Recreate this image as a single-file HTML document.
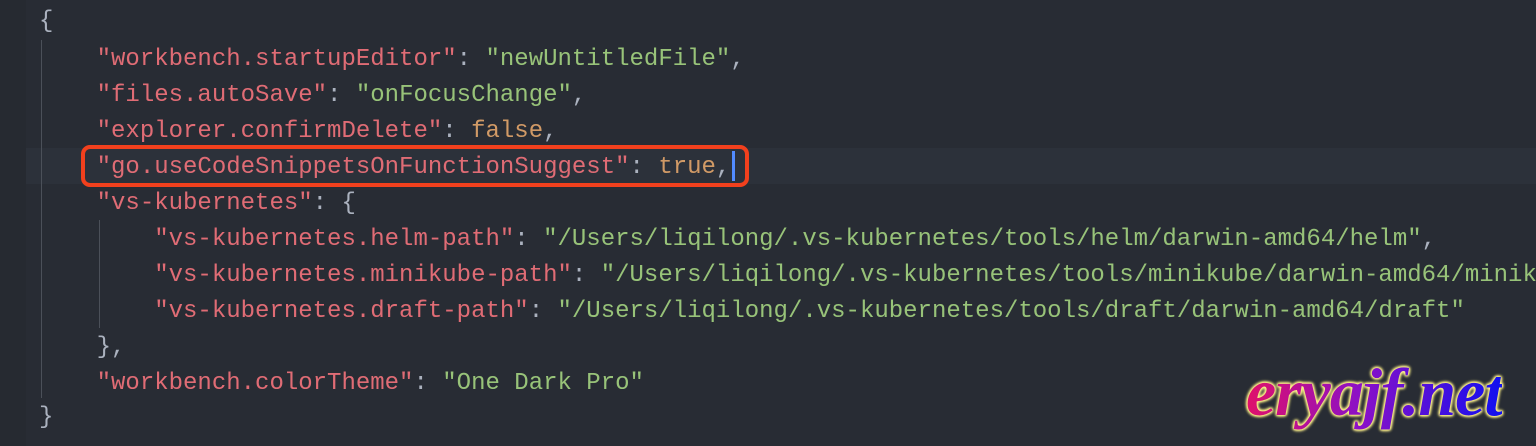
<!DOCTYPE html>
<html><head><meta charset="utf-8"><style>
html,body{margin:0;padding:0;}
body{width:1536px;height:446px;background:#282c34;position:relative;overflow:hidden;font-family:"Liberation Mono",monospace;font-size:24px;}
.gut{position:absolute;left:0;top:0;width:26px;height:446px;background:#262a31;}
.hl{position:absolute;left:26px;top:148px;width:1510px;height:36px;background:#2c313a;}
.l{position:absolute;left:39px;height:36px;line-height:36px;white-space:pre;color:#abb2bf;}
.k{color:#e06c75}.s{color:#98c379}.b{color:#d19a66}
.g{position:absolute;width:1px;background:#4b5059;}
.box{position:absolute;left:81px;top:145px;width:660px;height:34px;border:4px solid #f2401d;border-radius:9px;}
.cur{position:absolute;left:732px;top:151px;width:3px;height:30px;background:#528bff;}
.logo{position:absolute;left:1246px;top:354px;font-family:"Liberation Serif",serif;font-style:italic;font-weight:bold;font-size:68px;line-height:76px;
background:linear-gradient(90deg,#e0106a,#8a10c8 45%,#1010f0);-webkit-background-clip:text;background-clip:text;color:transparent;
filter:drop-shadow(0 0 1.5px #fff28a) drop-shadow(0 0 1px #fff28a) drop-shadow(0 0 0.5px #fff28a);letter-spacing:-1px;}
</style></head><body>
<div class="gut"></div>
<div class="hl"></div>
<div class="g" style="left:41px;top:40px;height:358px"></div>
<div class="g" style="left:99px;top:220px;height:108px"></div>
<div class="l" style="top:4px">{</div>
<div class="l" style="top:42px">    <span class="k">"workbench.startupEditor"</span>: <span class="s">"newUntitledFile"</span>,</div>
<div class="l" style="top:78px">    <span class="k">"files.autoSave"</span>: <span class="s">"onFocusChange"</span>,</div>
<div class="l" style="top:114px">    <span class="k">"explorer.confirmDelete"</span>: <span class="b">false</span>,</div>
<div class="l" style="top:150px">    <span class="k">"go.useCodeSnippetsOnFunctionSuggest"</span>: <span class="b">true</span>,</div>
<div class="l" style="top:186px">    <span class="k">"vs-kubernetes"</span>: {</div>
<div class="l" style="top:222px">        <span class="k">"vs-kubernetes.helm-path"</span>: <span class="s">"/Users/liqilong/.vs-kubernetes/tools/helm/darwin-amd64/helm"</span>,</div>
<div class="l" style="top:258px">        <span class="k">"vs-kubernetes.minikube-path"</span>: <span class="s">"/Users/liqilong/.vs-kubernetes/tools/minikube/darwin-amd64/minikube"</span>,</div>
<div class="l" style="top:294px">        <span class="k">"vs-kubernetes.draft-path"</span>: <span class="s">"/Users/liqilong/.vs-kubernetes/tools/draft/darwin-amd64/draft"</span></div>
<div class="l" style="top:330px">    },</div>
<div class="l" style="top:366px">    <span class="k">"workbench.colorTheme"</span>: <span class="s">"One Dark Pro"</span></div>
<div class="l" style="top:400px">}</div>
<div class="box"></div>
<div class="cur"></div>
<div class="logo">eryajf.net</div>
</body></html>
